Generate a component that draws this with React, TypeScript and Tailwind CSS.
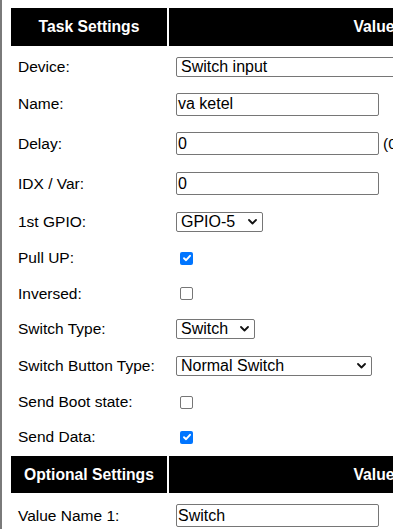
import React from "react";

type Row = {
  label: string;
  h: string;
  kind: "select" | "input" | "check";
  value?: string;
  w?: string;
  checked?: boolean;
  suffix?: string;
};

const rows: Row[] = [
  { label: "Device:", h: "h-[37px]", kind: "select", value: "Switch input", w: "w-[260px]" },
  { label: "Name:", h: "h-[38px]", kind: "input", value: "va ketel" },
  { label: "Delay:", h: "h-[41px]", kind: "input", value: "0", suffix: "(0 = disabled)" },
  { label: "IDX / Var:", h: "h-[39px]", kind: "input", value: "0" },
  { label: "1st GPIO:", h: "h-[37px]", kind: "select", value: "GPIO-5", w: "w-[87px]" },
  { label: "Pull UP:", h: "h-[36px]", kind: "check", checked: true },
  { label: "Inversed:", h: "h-[35px]", kind: "check", checked: false },
  { label: "Switch Type:", h: "h-[36px]", kind: "select", value: "Switch", w: "w-[79px]" },
  { label: "Switch Button Type:", h: "h-[37px]", kind: "select", value: "Normal Switch", w: "w-[196px]" },
  { label: "Send Boot state:", h: "h-[36px]", kind: "check", checked: false },
  { label: "Send Data:", h: "h-[34px]", kind: "check", checked: true },
];

function Chevron() {
  return (
    <svg width="9" height="6" viewBox="0 0 9 6" className="shrink-0">
      <path d="M1 1 L4.5 4.5 L8 1" fill="none" stroke="#111" strokeWidth="1.8" strokeLinecap="round" strokeLinejoin="round" />
    </svg>
  );
}

function Select({ value, w }: { value: string; w: string }) {
  return (
    <div className={`${w} h-[20px] border border-[#767676] rounded-[2px] flex items-center justify-between pl-[4px] pr-[5px] text-[16px] text-black bg-white shrink-0`}>
      <span className="leading-none whitespace-nowrap">{value}</span>
      <Chevron />
    </div>
  );
}

function TextInput({ value }: { value: string }) {
  return (
    <div className="w-[203px] h-[23px] border border-[#767676] rounded-[2px] flex items-center px-[1px] text-[16px] text-black bg-white shrink-0">
      <span className="leading-none whitespace-nowrap">{value}</span>
    </div>
  );
}

function Check({ checked }: { checked?: boolean }) {
  if (checked) {
    return (
      <div className="ml-[4px] w-[13px] h-[13px] rounded-[2px] bg-[#0075ff] flex items-center justify-center">
        <svg width="10" height="10" viewBox="0 0 10 10">
          <path d="M2 5.2 L4.1 7.2 L8 2.8" fill="none" stroke="white" strokeWidth="1.9" strokeLinecap="round" strokeLinejoin="round" />
        </svg>
      </div>
    );
  }
  return <div className="ml-[4px] w-[13px] h-[13px] rounded-[2px] border border-[#767676] bg-white" />;
}

function Header({ left }: { left: string }) {
  return (
    <div className="flex gap-[2px] h-[37px] shrink-0">
      <div className="w-[156px] shrink-0 bg-black text-white font-bold text-[15.7px] flex items-center justify-center">
        {left}
      </div>
      <div className="w-[410px] shrink-0 bg-black text-white font-bold text-[15.7px] flex items-center justify-center">
        Value
      </div>
    </div>
  );
}

export default function App() {
  return (
    <div
      className="w-[393px] h-[529px] overflow-hidden bg-white border-l-2 border-[#7a7a7a] text-black"
      style={{ fontFamily: '"Liberation Sans", Arial, sans-serif' }}
    >
      <div className="pl-[9px] pt-[8px] flex flex-col w-[600px]">
        <div className="h-[38px] flex gap-[2px] shrink-0">
          <div className="w-[156px] shrink-0 bg-black text-white font-bold text-[15.7px] flex items-center justify-center">
            Task Settings
          </div>
          <div className="w-[410px] shrink-0 bg-black text-white font-bold text-[15.7px] flex items-center justify-center">
            Value
          </div>
        </div>
        <div className="h-[2px]" />
        {rows.map((r) => (
          <div key={r.label} className={`${r.h} flex gap-[2px] items-center shrink-0`}>
            <div className="w-[156px] shrink-0 pl-[7px] text-[15.5px] whitespace-nowrap">{r.label}</div>
            <div className="w-[410px] shrink-0 pl-[7px] flex items-center">
              {r.kind === "select" && <Select value={r.value!} w={r.w!} />}
              {r.kind === "input" && <TextInput value={r.value!} />}
              {r.kind === "check" && <Check checked={r.checked} />}
              {r.suffix && <span className="ml-[4px] text-[15.5px] whitespace-nowrap">{r.suffix}</span>}
            </div>
          </div>
        ))}
        <div className="h-[2px]" />
        <Header left="Optional Settings" />
        <div className="h-[2px]" />
        <div className="h-[41px] flex gap-[2px] items-center shrink-0">
          <div className="w-[156px] shrink-0 pl-[7px] text-[15.5px] whitespace-nowrap">Value Name 1:</div>
          <div className="w-[410px] shrink-0 pl-[7px] flex items-center">
            <TextInput value="Switch" />
          </div>
        </div>
      </div>
    </div>
  );
}
